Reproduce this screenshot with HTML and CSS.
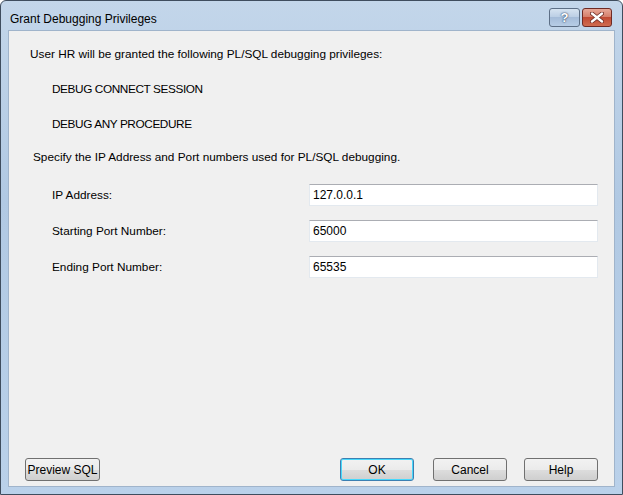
FILE: index.html
```html
<!DOCTYPE html>
<html lang="en">
<head>
    <meta charset="UTF-8">
    <title>Grant Debugging Privileges</title>
    <link rel="stylesheet" href="styles.css">
</head>
<body>
    <div class="window">
        <div class="titlebar">
            <span class="title">Grant Debugging Privileges</span>
            <div class="caption-btns">
                <div class="cap-btn help-cap">?</div>
                <div class="cap-btn close-cap">
                    <svg width="14" height="11" viewBox="0 0 14 11">
                        <path d="M2 1.5 L12 9.5 M12 1.5 L2 9.5" stroke="#6b2a22" stroke-width="4" stroke-linecap="round"/>
                        <path d="M2 1.5 L12 9.5 M12 1.5 L2 9.5" stroke="#ffffff" stroke-width="2.4" stroke-linecap="round"/>
                    </svg>
                </div>
            </div>
        </div>

        <div class="client">
            <div class="intro">User HR will be granted the following PL/SQL debugging privileges:</div>
            <div class="priv first">DEBUG CONNECT SESSION</div>
            <div class="priv">DEBUG ANY PROCEDURE</div>
            <div class="specify">Specify the IP Address and Port numbers used for PL/SQL debugging.</div>

            <div class="fields">
                <div class="field-row">
                    <label for="ip">IP Address:</label>
                    <input type="text" id="ip" value="127.0.0.1">
                </div>
                <div class="field-row">
                    <label for="startPort">Starting Port Number:</label>
                    <input type="text" id="startPort" value="65000">
                </div>
                <div class="field-row">
                    <label for="endPort">Ending Port Number:</label>
                    <input type="text" id="endPort" value="65535">
                </div>
            </div>

            <div class="button-bar">
                <button class="btn">Preview SQL</button>
                <div class="right-btns">
                    <button class="btn default">OK</button>
                    <button class="btn cancel">Cancel</button>
                    <button class="btn">Help</button>
                </div>
            </div>
        </div>
    </div>
</body>
</html>
```

FILE: styles.css
```css
html, body {
    margin: 0;
    padding: 0;
}
body {
    width: 623px;
    height: 495px;
    overflow: hidden;
    font-family: "Segoe UI", "Liberation Sans", Arial, sans-serif;
    font-size: 12px;
    color: #000;
}
.window {
    box-sizing: border-box;
    width: 623px;
    height: 495px;
    border: 1px solid #3f4d5e;
    border-radius: 6px 6px 0 0;
    background: linear-gradient(to bottom, #c3d6ea 0%, #b1c9e3 40%, #bad1ea 100%);
    display: flex;
    flex-direction: column;
    padding: 0 7px 7px 7px;
}
.titlebar {
    height: 29px;
    display: flex;
    justify-content: space-between;
    align-items: flex-start;
    flex-shrink: 0;
}
.title {
    margin-top: 11px;
    margin-left: 2px;
    font-size: 12px;
    color: #000;
}
.caption-btns {
    display: flex;
    gap: 2px;
    margin-top: 7px;
    margin-right: 3px;
}
.cap-btn {
    box-sizing: border-box;
    height: 19px;
    border: 1px solid #5d6f86;
    border-radius: 3px;
    display: flex;
    align-items: center;
    justify-content: center;
}
.help-cap {
    width: 31px;
    background: linear-gradient(to bottom, #d6e3f1 0%, #bccfe5 45%, #a5bcd9 50%, #b7cde6 100%);
    color: #fff;
    font-weight: bold;
    font-size: 13px;
    text-shadow: 0 0 2px #2d4463, 0 0 1px #2d4463;
}
.close-cap {
    width: 30px;
    border-color: #6e2a24;
    background: linear-gradient(to bottom, #e7a898 0%, #d6806c 45%, #c14a33 50%, #cf6c50 100%);
}
.client {
    flex: 1;
    background: #f0f0f0;
    border: 1px solid #a0b4cb;
    display: flex;
    flex-direction: column;
    padding: 15px 16px 5px 16px;
    line-height: 16px;
    font-size: 11.8px;
}
.intro {
    margin-left: 5px;
}
.priv {
    margin-left: 27px;
    margin-top: 19px;
    letter-spacing: -0.4px;
}
.specify {
    margin-left: 8px;
    margin-top: 17px;
}
.fields {
    margin-top: 19px;
    display: flex;
    flex-direction: column;
    gap: 14px;
}
.field-row {
    display: flex;
    align-items: center;
    height: 22px;
}
.field-row label {
    margin-left: 27px;
    width: 256px;
}
.field-row input {
    box-sizing: border-box;
    width: 289px;
    height: 22px;
    margin-left: auto;
    border: 1px solid #e3e9ef;
    border-top-color: #abadb3;
    background: #fff;
    font-family: inherit;
    font-size: 12px;
    padding: 0 3px;
    outline: none;
}
.button-bar {
    margin-top: auto;
    display: flex;
    justify-content: space-between;
}
.right-btns {
    display: flex;
    gap: 17px;
}
.btn {
    box-sizing: border-box;
    width: 75px;
    height: 23px;
    border: 1px solid #707070;
    border-radius: 3px;
    background: linear-gradient(to bottom, #f2f2f2 0%, #ebebeb 50%, #dddddd 51%, #cfcfcf 100%);
    font-family: inherit;
    font-size: 12px;
    color: #000;
    padding: 0;
}
.right-btns .btn {
    width: 74px;
}
.btn.cancel {
    margin-left: 2px;
}
.btn.default {
    border-color: #3c7fb1;
    box-shadow: inset 0 0 0 1px #48d8fb;
}
```
